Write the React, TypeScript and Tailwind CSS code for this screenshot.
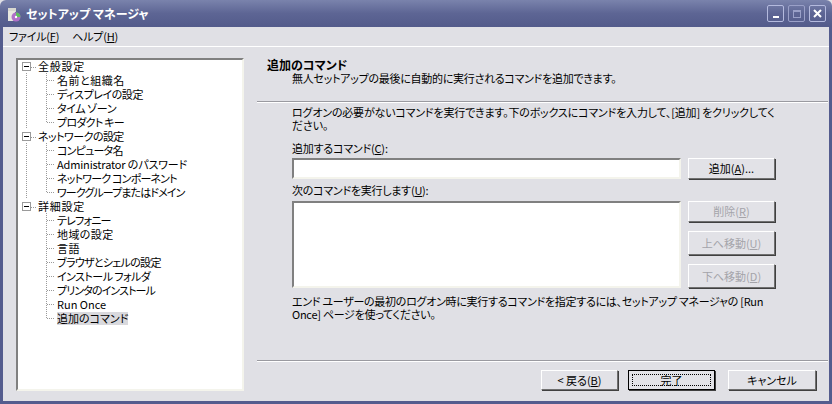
import React from 'react';

const font = "font-['Noto_Sans_CJK_JP','Liberation_Sans',sans-serif] [font-feature-settings:'palt']";

const Key = ({ k }: { k: string }) => (
  <>
    (<span className="underline underline-offset-1">{k}</span>)
  </>
);

const Expander = () => (
  <svg width="38" height="14" className="shrink-0" shapeRendering="crispEdges">
    <line x1="13" y1="8" x2="19" y2="8" stroke="#9a9a9a" strokeDasharray="1 1" />
    <rect x="4.5" y="3.5" width="8" height="8" fill="#fff" stroke="#9a9a9a" />
    <line x1="6" y1="7.5" x2="11" y2="7.5" stroke="#000" />
  </svg>
);

// tree connectors for a leaf row
const Lines = ({ last, outer }: { last?: boolean; outer?: boolean }) => (
  <svg width="38" height="14" className="shrink-0" shapeRendering="crispEdges">
    {outer && <line x1="8.5" y1="0" x2="8.5" y2="14" stroke="#9a9a9a" strokeDasharray="1 1" />}
    <line x1="28.5" y1="0" x2="28.5" y2={last ? 8 : 14} stroke="#9a9a9a" strokeDasharray="1 1" />
    <line x1="29" y1="7.5" x2="37" y2="7.5" stroke="#9a9a9a" strokeDasharray="1 1" />
  </svg>
);

const tree = [
  {
    name: '全般設定',
    cls: 'tracking-[0.75px]',
    outer: true,
    items: [
      { text: '名前と組織名', cls: 'tracking-[0.5px]' },
      { text: 'ディスプレイの設定', cls: 'tracking-[-0.45px]' },
      { text: 'タイム ゾーン', cls: 'tracking-[-0.4px]' },
      { text: 'プロダクト キー', cls: 'tracking-[-0.75px]' },
    ],
  },
  {
    name: 'ネットワークの設定',
    cls: 'tracking-[-0.55px]',
    outer: true,
    items: [
      { text: 'コンピュータ名', cls: 'tracking-[-0.8px]' },
      { text: 'Administrator のパスワード', cls: 'tracking-[-0.15px]' },
      { text: 'ネットワーク コンポーネント', cls: 'tracking-[-0.8px]' },
      { text: 'ワークグループまたはドメイン', cls: 'tracking-[-0.9px]' },
    ],
  },
  {
    name: '詳細設定',
    cls: 'tracking-[0.75px]',
    outer: false,
    items: [
      { text: 'テレフォニー', cls: 'tracking-[-0.8px]' },
      { text: '地域の設定', cls: 'tracking-[0.4px]' },
      { text: '言語', cls: 'tracking-[0.5px]' },
      { text: 'ブラウザとシェルの設定', cls: 'tracking-[-0.7px]' },
      { text: 'インストール フォルダ', cls: 'tracking-[-0.55px]' },
      { text: 'プリンタのインストール', cls: 'tracking-[-0.9px]' },
      { text: 'Run Once', cls: '' },
      { text: '追加のコマンド', cls: 'bg-[#d9d9dd]' },
    ],
  },
];

const Btn = ({ children, disabled, h = 'h-[21px]', w = 'w-[87px]' }: { children: React.ReactNode; disabled?: boolean; h?: string; w?: string }) => (
  <div
    className={`${w} ${h} flex items-center justify-center border border-t-white border-l-white border-r-[#707070] border-b-[#707070] bg-[#e2e2e7] shadow-[1px_1px_0_#404040] leading-none ${disabled ? 'text-[#a4a4aa]' : 'text-black'}`}
  >
    <span>{children}</span>
  </div>
);

const sunken = 'border-2 border-t-[#808080] border-l-[#808080] border-r-[#f4f4ec] border-b-[#f4f4ec] bg-white';

export default function App() {
  return (
    <div className={`${font} w-[832px] h-[404px] flex flex-col overflow-hidden bg-[#e0e0e5] text-black text-[11px] leading-[13px]`}>
      <div className="h-[27px] shrink-0 flex items-center pl-[6px] pr-[6px] rounded-t-[6px] bg-gradient-to-b from-[#7a83ac] via-[#5d6594] to-[#535b8b]">
        <svg width="16" height="16" viewBox="0 0 16 16" className="shrink-0">
          <rect x="2" y="2" width="8" height="4" fill="#d8d8d0" />
          <rect x="2" y="5" width="7" height="10" fill="#e8e8e0" />
          <circle cx="10" cy="11" r="4.5" fill="#b070c8" />
          <path d="M10 6.5a4.5 4.5 0 0 1 4.5 4.5H10z" fill="#60c060" />
          <circle cx="10" cy="11" r="1.2" fill="#fff" />
        </svg>
        <span className="ml-[4px] text-white font-bold text-[12px]">セットアップ マネージャ</span>
        <div className="ml-auto flex gap-[4px]">
          <div className="w-[17px] h-[17px] border border-[#b4bade] rounded-[2px] flex items-end justify-center pb-[3px]">
            <div className="w-[6px] h-[2px] bg-white" />
          </div>
          <div className="w-[17px] h-[17px] border border-[#9aa0c8] rounded-[2px] flex items-center justify-center">
            <div className="w-[8px] h-[8px] border border-[#9aa0c8] border-t-2" />
          </div>
          <div className="w-[17px] h-[17px] border border-[#b4bade] rounded-[2px] flex items-center justify-center">
            <svg width="9" height="9" viewBox="0 0 9 9">
              <path d="M1 1l7 7M8 1L1 8" stroke="#fff" strokeWidth="2" />
            </svg>
          </div>
        </div>
      </div>

      <div className="flex-1 flex flex-col border-x-[3px] border-b-[3px] border-[#545c8e] min-h-0">
        <div className="h-[19px] shrink-0 flex items-center gap-[13px] pl-[6px] tracking-[-0.2px]">
          <span>ファイル<Key k="F" /></span>
          <span>ヘルプ<Key k="H" /></span>
        </div>
        <div className="h-px shrink-0 bg-white" />

        <div className="flex-1 flex min-h-0">
          <div className="pl-[13px] pt-[11px] shrink-0">
            <div className={`${sunken} w-[228px] h-[333px]`}>
              <div className="-mt-[1px]">
                {tree.map((g) => (
                  <div key={g.name}>
                    <div className="h-[14px] flex items-center whitespace-nowrap">
                      <Expander />
                      <span className={`-ml-[18px] ${g.cls}`}>{g.name}</span>
                    </div>
                    {g.items.map((it, i) => (
                      <div key={it.text} className="h-[14px] flex items-center whitespace-nowrap">
                        <Lines outer={g.outer} last={i === g.items.length - 1} />
                        <span className={`ml-[1px] ${it.cls}`}>{it.text}</span>
                      </div>
                    ))}
                  </div>
                ))}
              </div>
            </div>
          </div>

          <div className="flex-1 ml-[13px] mr-px flex flex-col min-w-0">
            <div className="h-[54px] shrink-0 pt-[11px]">
              <div className="pl-[10px] font-bold text-[12px]">追加のコマンド</div>
              <div className="pl-[35px] mt-px tracking-[-0.27px]">無人セットアップの最後に自動的に実行されるコマンドを追加できます。</div>
            </div>
            <div className="h-[2px] shrink-0 border-t border-[#9a9aa0] bg-white" />

            <div className="h-[257px] shrink-0 pl-[35px] pt-[3px]">
              <div className="whitespace-nowrap tracking-[-0.18px]">ログオンの必要がないコマンドを実行できます。下のボックスにコマンドを入力して、[追加] をクリックしてく<br />ださい。</div>
              <div className="mt-[10px] h-[13px] tracking-[-0.2px]">追加するコマンド<Key k="C" />:</div>
              <div className="mt-[3px] flex gap-[7px]">
                <div className={`${sunken} w-[389px] h-[21px]`} />
                <Btn>追加<Key k="A" />...</Btn>
              </div>
              <div className="mt-[5px] h-[13px] tracking-[-0.25px]">次のコマンドを実行します<Key k="U" />:</div>
              <div className="mt-[4px] flex gap-[7px]">
                <div className={`${sunken} w-[389px] h-[87px]`} />
                <div className="flex flex-col gap-[9px]">
                  <Btn disabled>削除<Key k="R" /></Btn>
                  <Btn disabled h="h-[24px]">上へ移動<Key k="U" /></Btn>
                  <Btn disabled h="h-[24px]">下へ移動<Key k="D" /></Btn>
                </div>
              </div>
              <div className="mt-[7px] whitespace-nowrap tracking-[-0.28px]">エンド ユーザーの最初のログオン時に実行するコマンドを指定するには、セットアップ マネージャの [Run<br />Once] ページを使ってください。</div>
            </div>

            <div className="h-[2px] shrink-0 border-t border-[#9a9aa0] bg-white" />

            <div className="flex-1 flex justify-end pr-[12px] pt-[8px]">
              <Btn w="w-[77px]" h="h-[20px]">&lt; 戻る<Key k="B" /></Btn>
              <div className="ml-[10px] w-[87px] h-[20px] border border-black bg-[#e2e2e7] p-[3px] shadow-[1px_1px_0_#404040]">
                <div className="h-full border border-dotted border-black flex items-center justify-center">完了</div>
              </div>
              <div className="ml-[13px]">
                <Btn h="h-[20px]" w="w-[88px]">キャンセル</Btn>
              </div>
            </div>
          </div>
        </div>
      </div>
    </div>
  );
}
